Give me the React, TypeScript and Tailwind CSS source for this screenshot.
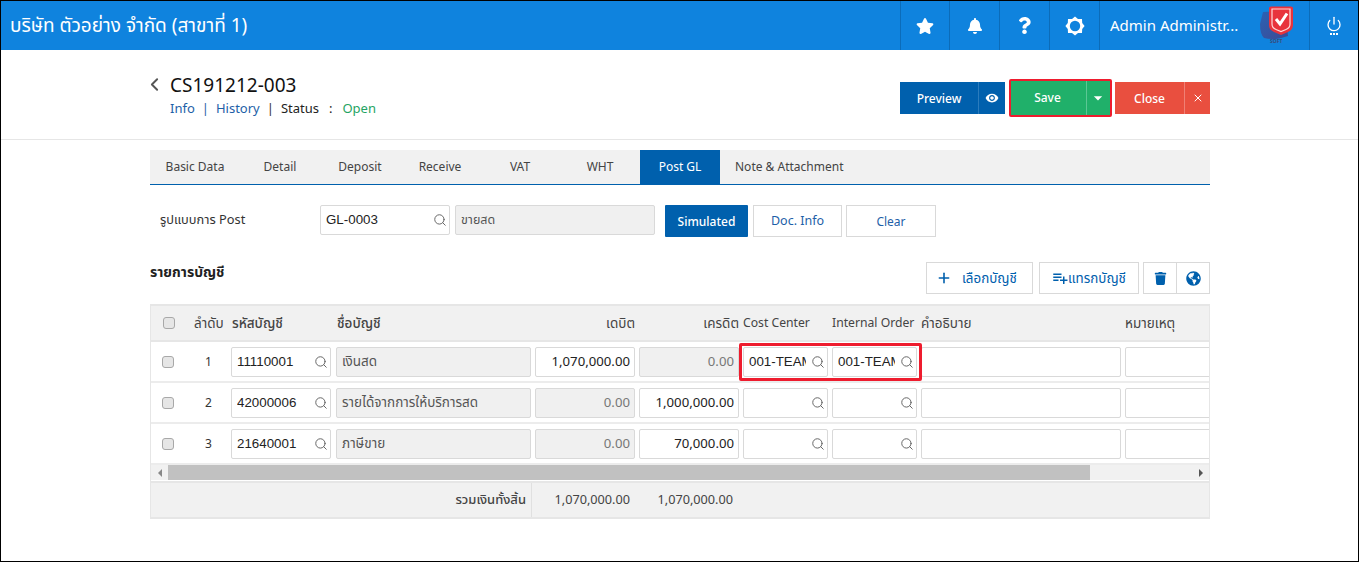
import React from "react";
import { Search, ChevronLeft, X, Plus, Power } from "lucide-react";
import { FaStar, FaBell, FaQuestion, FaTrash, FaGlobeAmericas } from "react-icons/fa";
import { MdVisibility, MdPlaylistAdd, MdArrowDropDown } from "react-icons/md";

const Gear = () => (
  <svg width="20" height="20" viewBox="0 0 20 20" fill="none">
    <path d="M10 0.5 L13 3 L17 3 L17.2 7 L19.6 10 L17.2 13 L17 17 L13 17 L10 19.5 L7 17 L3 17 L2.8 13 L0.4 10 L2.8 7 L3 3 L7 3 Z" fill="#fff" />
    <circle cx="10" cy="10" r="5.2" fill="#0f83de" />
  </svg>
);

const Logo = () => (
  <svg width="34" height="38" viewBox="0 0 34 38">
    <defs>
      <linearGradient id="lg" x1="0" y1="0" x2="1" y2="1">
        <stop offset="0" stopColor="#2a62b4" />
        <stop offset="1" stopColor="#3d4a94" />
      </linearGradient>
    </defs>
    <path d="M3 6 L26 5 L28 30 Q14 35 4 32 Q0 28 0 18 Z" fill="url(#lg)" />
    <path d="M9 2 Q9 0.5 11 0.5 L31 0.5 Q33 0.5 33 2 L33 19 Q33 24 28 26 L21 29 L14 26 Q9 24 9 19 Z" fill="#e8333c" />
    <path d="M12 3 L30 3 L30 18 Q30 22 26 23.5 L21 25.5 L16 23.5 Q12 22 12 18 Z" fill="none" stroke="#ffd9d9" strokeWidth="1.2" />
    <path d="M16 13 L20 18 L27 7.5" fill="none" stroke="#fff" strokeWidth="3" />
    <text x="10" y="37" fontSize="5" fontWeight="700" fill="#3b4a7a">SOFT</text>
  </svg>
);

const HeaderCell = ({ children, w = "w-[50px]" }: { children: React.ReactNode; w?: string }) => (
  <div className={`${w} h-full flex items-center justify-center border-l border-[#0b6cb9] text-white`}>{children}</div>
);

const Lookup = ({ value, w }: { value?: string; w: string }) => (
  <div className={`${w} shrink-0 h-[30px] bg-white border border-[#d9d9d9] rounded-[2px] flex items-center pl-[5px] pr-[2px]`}>
    <div className="flex-1 min-w-0 overflow-hidden whitespace-nowrap text-[13.33px] text-[#222] font-['Liberation_Sans',Arial,sans-serif]">{value}</div>
    <Search size={14} className="text-[#666] shrink-0 ml-[5px]" strokeWidth={1.7} />
  </div>
);

const Amount = ({ value, disabled }: { value: string; disabled?: boolean }) => (
  <div className={`w-[100px] shrink-0 h-[30px] border border-[#d9d9d9] rounded-[2px] flex items-center justify-end pr-[4px] text-[13.2px] ${disabled ? "bg-[#f0f0f0] text-[#777]" : "bg-white text-[#222]"}`}>
    {value}
  </div>
);

const Check = () => (
  <input type="checkbox" className="appearance-none block w-[12px] h-[12px] bg-[#e6e6e6] border border-[#a8a8a8] rounded-[3px]" />
);

const Row = ({ n, code, name, dr, cr, drOff, crOff, cost, order, boxed }: { n: number; code: string; name: string; dr: string; cr: string; drOff?: boolean; crOff?: boolean; cost?: string; order?: string; boxed?: boolean }) => (
  <div className="h-[41px] flex items-center border-b-2 border-[#ececec] pl-[11px]">
    <div className="w-[12px]"><Check /></div>
    <div className="w-[57px] pl-[31px] text-[12px] text-[#333] shrink-0">{n}</div>
    <Lookup value={code} w="w-[100px]" />
    <div className="w-[195px] ml-[5px] shrink-0 h-[30px] bg-[#f0f0f0] border border-[#d9d9d9] rounded-[2px] flex items-center pl-[5px] text-[13.5px] text-[#555]">{name}</div>
    <div className="ml-[4px] shrink-0"><Amount value={dr} disabled={drOff} /></div>
    <div className="ml-[4px] shrink-0"><Amount value={cr} disabled={crOff} /></div>
    <div className="ml-[4px] shrink-0 flex gap-[4px] relative">
      <Lookup value={cost} w="w-[85px]" />
      <Lookup value={order} w="w-[85px]" />
      {boxed && <div className="absolute -left-[4px] -right-[5px] -top-[4px] -bottom-[4px] border-[3px] border-[#ee1c2e] rounded-[2px] z-10" />}
    </div>
    <div className="ml-[4px] w-[200px] h-[30px] shrink-0 bg-white border border-[#d9d9d9] rounded-[2px]" />
    <div className="ml-[4px] w-[100px] h-[30px] shrink-0 bg-white border border-[#d9d9d9] rounded-[2px]" />
  </div>
);

export default function App() {
  const tabs = ["Basic Data", "Detail", "Deposit", "Receive", "VAT", "WHT", "Post GL", "Note & Attachment"];
  return (
    <div className="w-[1359px] h-[562px] border border-black bg-white overflow-hidden font-['Noto_Sans','Noto_Sans_Thai',Tahoma,sans-serif] text-[12px] text-[#333]">
      {/* top bar */}
      <div className="h-[49px] bg-[#0f83de] flex items-center text-white">
        <div className="flex-1 pl-[9px] text-[19px] whitespace-nowrap">บริษัท ตัวอย่าง จำกัด (สาขาที่ 1)</div>
        <HeaderCell w="w-[49px]"><FaStar size={18} /></HeaderCell>
        <HeaderCell><FaBell size={16} /></HeaderCell>
        <HeaderCell><FaQuestion size={17} /></HeaderCell>
        <HeaderCell><Gear /></HeaderCell>
        <div className="w-[210px] h-full border-l border-[#0b6cb9] flex items-center pl-[10px]">
          <span className="text-[15px] whitespace-nowrap">Admin Administr...</span>
          <div className="ml-[22px] mt-[-2px]"><Logo /></div>
        </div>
        <div className="w-[49px] h-full border-l border-[#0b6cb9] flex flex-col items-center justify-center">
          <Power size={16} strokeWidth={2} />
          <div className="flex gap-[1px] mt-[1px]">
            <span className="w-[2px] h-[2px] bg-white" /><span className="w-[2px] h-[2px] bg-white" /><span className="w-[2px] h-[2px] bg-white" />
          </div>
        </div>
      </div>

      {/* title band */}
      <div className="h-[90px] border-b border-[#e6e6e6] pl-[149px] pr-[148px] flex justify-between">
        <div className="flex pt-[22px]">
          <ChevronLeft size={21} className="text-[#555] mt-[2px] -ml-[6px] mr-[5px]" strokeWidth={2.2} />
          <div>
            <div className="text-[19px] leading-[26px] text-[#111]">CS191212-003</div>
            <div className="text-[13px] leading-[20px] whitespace-nowrap">
              <span className="text-[#1e5fa8]">Info</span>
              <span className="text-[#1e5fa8] mx-[7px]">|</span>
              <span className="text-[#1e5fa8]">History</span>
              <span className="text-[#333] mx-[7px]">|</span>
              <span className="text-[#222]">Status</span>
              <span className="text-[#222] mx-[10px]">:</span>
              <span className="text-[#1fa463]">Open</span>
            </div>
          </div>
        </div>
        <div className="flex items-start pt-[32px] text-white text-[12px] font-medium">
          <div className="flex h-[32px] bg-[#0060ad]">
            <div className="w-[78px] flex items-center justify-center pt-[1px]">Preview</div>
            <div className="w-[27px] border-l border-[#2b7cbd] flex items-center justify-center"><MdVisibility size={14} /></div>
          </div>
          <div className="ml-[4px] -mt-[3px] flex h-[38px] bg-[#20b06a] border-[2px] border-[#ee1c2e] rounded-[2px] w-[103px]">
            <div className="w-[75px] flex items-center justify-center pr-[2px]">Save</div>
            <div className="flex-1 border-l border-[#5cc795] flex items-center justify-center pr-[2px]"><MdArrowDropDown size={20} /></div>
          </div>
          <div className="ml-[3px] flex h-[32px] bg-[#e94f3f]">
            <div className="w-[69px] flex items-center justify-center pt-[1px]">Close</div>
            <div className="w-[26px] border-l border-[#f08075] flex items-center justify-center"><X size={12} /></div>
          </div>
        </div>
      </div>

      <div className="mx-[149px] w-[1060px]">
        {/* tabs */}
        <div className="mt-[10px] h-[35px] bg-[#f1f1f1] border-b-[1px] border-[#0060ad] flex text-[12px] text-[#444]">
          {tabs.map((t) => (
            <div key={t} className={`px-[15px] flex items-center justify-center whitespace-nowrap ${t === "Basic Data" ? "min-w-[90px]" : "min-w-[80px]"} ${t === "Post GL" ? "bg-[#0060ad] text-white" : ""}`}>{t}</div>
          ))}
        </div>

        {/* post form */}
        <div className="mt-[20px] flex items-start h-[32px]">
          <div className="w-[170px] pl-[10px] h-[30px] flex items-center text-[12.8px] text-[#333]">รูปแบบการ Post</div>
          <Lookup value="GL-0003" w="w-[130px]" />
          <div className="ml-[5px] w-[200px] h-[30px] bg-[#f0f0f0] border border-[#d9d9d9] rounded-[2px] flex items-center pl-[5px] text-[12.5px] text-[#555]">ขายสด</div>
          <div className="ml-[10px] w-[83px] h-[32px] bg-[#0060ad] text-white flex items-center justify-center rounded-[1px] font-medium pt-[1px]">Simulated</div>
          <div className="ml-[5px] w-[89px] h-[32px] border border-[#d9d9d9] text-[#1e5fa8] flex items-center justify-center text-[12.5px] pt-[1px]">Doc. Info</div>
          <div className="ml-[4px] w-[90px] h-[32px] border border-[#d9d9d9] text-[#1e5fa8] flex items-center justify-center pt-[1px]">Clear</div>
        </div>

        {/* section header */}
        <div className="mt-[25px] h-[32px] flex items-start justify-between">
          <div className="text-[14px] font-bold text-[#222] mt-[-1px]">รายการบัญชี</div>
          <div className="flex text-[#0060ad] text-[13.4px]">
            <div className="w-[107px] h-[32px] border border-[#d9d9d9] flex items-center pl-[9px] gap-[10px]"><Plus size={16} strokeWidth={2.4} /><span>เลือกบัญชี</span></div>
            <div className="ml-[6px] w-[100px] h-[32px] border border-[#d9d9d9] flex items-center pl-[11px]"><MdPlaylistAdd size={18} className="-mr-[1px]" /><span>แทรกบัญชี</span></div>
            <div className="ml-[4px] w-[34px] h-[32px] border border-[#d9d9d9] flex items-center justify-center"><FaTrash size={13} /></div>
            <div className="w-[33px] h-[32px] border border-l-0 border-[#d9d9d9] flex items-center justify-center"><FaGlobeAmericas size={15} /></div>
          </div>
        </div>

        {/* table */}
        <div className="mt-[10px] border-x border-b-2 border-t-2 border-[#e6e6e6] overflow-hidden h-[215px]">
          <div className="h-[36px] bg-[#f1f1f1] flex items-center border-b-2 border-[#e6e6e6] text-[13.5px] text-[#444] whitespace-nowrap pl-[12px]">
            <div className="w-[12px] shrink-0"><Check /></div>
            <div className="w-[57px] shrink-0 pl-[19px]">ลำดับ</div>
            <div className="w-[105px] shrink-0 font-medium">รหัสบัญชี</div>
            <div className="w-[195px] shrink-0 font-medium">ชื่อบัญชี</div>
            <div className="w-[103px] shrink-0 text-right">เดบิต</div>
            <div className="w-[104px] shrink-0 text-right">เครดิต</div>
            <div className="w-[93px] shrink-0 pl-[4px] text-[12.2px]">Cost Center</div>
            <div className="w-[89px] shrink-0 text-[12.2px]">Internal Order</div>
            <div className="w-[204px] shrink-0">คำอธิบาย</div>
            <div className="shrink-0">หมายเหตุ</div>
          </div>
          <Row n={1} code="11110001" name="เงินสด" dr="1,070,000.00" cr="0.00" crOff cost="001-TEAM" order="001-TEAM" boxed />
          <Row n={2} code="42000006" name="รายได้จากการให้บริการสด" dr="0.00" drOff cr="1,000,000.00" />
          <Row n={3} code="21640001" name="ภาษีขาย" dr="0.00" drOff cr="70,000.00" />
          {/* scrollbar */}
          <div className="h-[15px] bg-[#f1f1f1] flex items-center">
            <div className="w-[17px] flex justify-center"><span className="w-0 h-0 border-y-[4px] border-y-transparent border-r-[4px] border-r-[#888]" /></div>
            <div className="w-[922px] h-full bg-[#c1c1c1]" />
            <div className="flex-1 flex justify-end pr-[6px]"><span className="w-0 h-0 border-y-[4px] border-y-transparent border-l-[4px] border-l-[#555]" /></div>
          </div>
          {/* footer */}
          <div className="mt-[1px] h-[38px] bg-[#f1f1f1] border-t-2 border-[#e6e6e6] flex items-center text-[12.7px] text-[#444]">
            <div className="w-[381px] h-full flex items-center justify-end pr-[5px] pb-[3px] font-medium border-r border-[#e0e0e0] text-[13px]">รวมเงินทั้งสิ้น</div>
            <div className="w-[98px] text-right pb-[3px]">1,070,000.00</div>
            <div className="w-[103px] text-right pb-[3px]">1,070,000.00</div>
          </div>
        </div>
      </div>
    </div>
  );
}
